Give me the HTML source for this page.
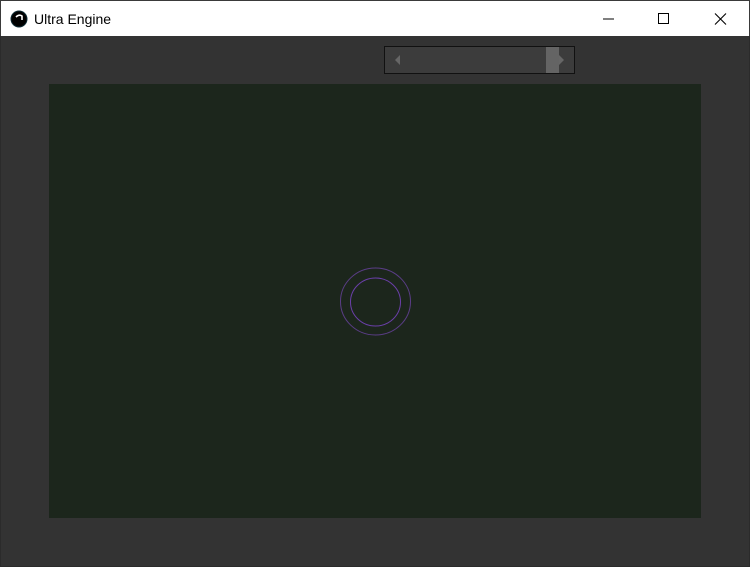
<!DOCTYPE html>
<html><head><style>
*{margin:0;padding:0;box-sizing:border-box}
body{width:750px;height:567px;background:#333;position:relative;overflow:hidden;font-family:"Liberation Sans",sans-serif}
#win{position:absolute;left:0;top:0;width:750px;height:567px;border:1px solid #2b2b2b;border-top:1px solid #444}
#title{position:absolute;left:0;top:0;width:750px;height:36px;background:#fff;border:1px solid #3a3a3a;border-bottom:none}
#title span{position:absolute;left:33px;top:10px;font-size:14px;color:#000}
#slider{position:absolute;left:384px;top:46px;width:191px;height:28px;border:1px solid #111;background:#3c3c3c}
#thumb{position:absolute;left:161px;top:0;width:13px;height:26px;background:#646464}
#canvas{position:absolute;left:49px;top:84px;width:652px;height:434px;background:#1c261c}
</style></head><body>
<div id="win"></div>
<div id="title">
<svg style="position:absolute;left:9px;top:9px" width="18" height="18" viewBox="0 0 18 18"><circle cx="9" cy="9" r="8.5" fill="#0d2a33"/><circle cx="9" cy="9" r="7.5" fill="#000"/><path d="M6 7 Q9 4 12 6 L12 10" stroke="#fff" stroke-width="1.6" fill="none"/></svg>
<span>Ultra Engine</span>
<svg style="position:absolute;left:600px;top:11px" width="130" height="14" viewBox="0 0 130 14"><path d="M2 7H13" stroke="#000" stroke-width="1"/><rect x="57.5" y="1.5" width="10" height="10" fill="none" stroke="#000"/><path d="M114 1.5L125 12.5M125 1.5L114 12.5" stroke="#000" stroke-width="1.1"/></svg>
</div>
<div id="slider"><div id="thumb"></div>
<svg style="position:absolute;left:0;top:0" width="189" height="26"><path d="M10 13L15 8V18Z" fill="#666"/><path d="M179 13L174 8V18Z" fill="#666"/></svg>
</div>
<div id="canvas"></div>
<svg style="position:absolute;left:0;top:0" width="750" height="567"><ellipse cx="375.5" cy="301.5" rx="35" ry="33.5" fill="none" stroke="#5a3d86" stroke-width="1"/><ellipse cx="375.5" cy="302" rx="25" ry="24" fill="none" stroke="#6a3fa8" stroke-width="1"/></svg>
</body></html>
